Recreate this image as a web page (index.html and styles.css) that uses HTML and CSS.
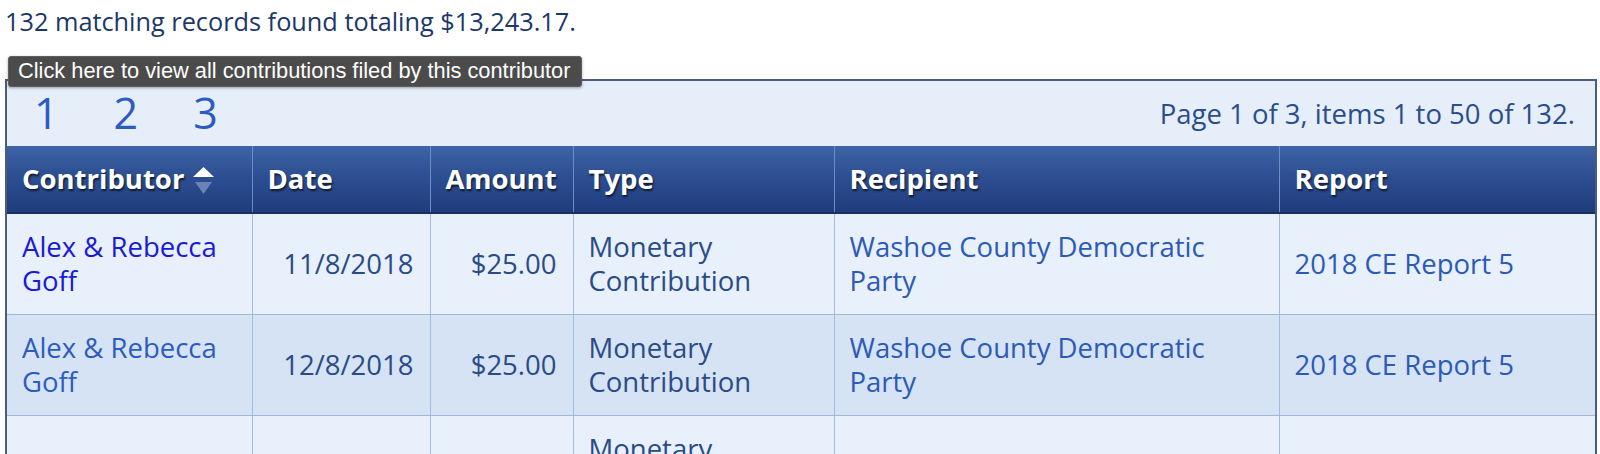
FILE: index.html
```html
<!DOCTYPE html>
<html lang="en">
<head>
<meta charset="utf-8">
<title>Contributions</title>
<link rel="stylesheet" href="styles.css">
</head>
<body>
<div class="page">
  <p class="summary">132 matching records found totaling $13,243.17.</p>
  <div class="tooltip">Click here to view all contributions filed by this contributor</div>
  <div class="results">
    <div class="pager">
      <div class="pages">
        <a href="#" class="pg">1</a>
        <a href="#" class="pg">2</a>
        <a href="#" class="pg">3</a>
      </div>
      <div class="page-info">Page 1 of 3, items 1 to 50 of 132.</div>
    </div>
    <table class="grid">
      <colgroup>
        <col class="c-contrib">
        <col class="c-date">
        <col class="c-amount">
        <col class="c-type">
        <col class="c-recip">
        <col class="c-report">
      </colgroup>
      <thead>
        <tr>
          <th>Contributor <svg class="sort" width="23" height="30" viewBox="0 0 23 30"><polygon points="1,11 22,11 11.5,1" fill="#ffffff"/><polygon points="3,16 20,16 11.5,28" fill="#6a82b6"/></svg></th>
          <th>Date</th>
          <th class="num">Amount</th>
          <th>Type</th>
          <th>Recipient</th>
          <th>Report</th>
        </tr>
      </thead>
      <tbody>
        <tr class="odd">
          <td><a href="#" class="contrib hover">Alex &amp; Rebecca Goff</a></td>
          <td class="num">11/8/2018</td>
          <td class="num">$25.00</td>
          <td>Monetary Contribution</td>
          <td><a href="#" class="link">Washoe County Democratic Party</a></td>
          <td><a href="#" class="link">2018 CE Report 5</a></td>
        </tr>
        <tr class="even">
          <td><a href="#" class="contrib">Alex &amp; Rebecca Goff</a></td>
          <td class="num">12/8/2018</td>
          <td class="num">$25.00</td>
          <td>Monetary Contribution</td>
          <td><a href="#" class="link">Washoe County Democratic Party</a></td>
          <td><a href="#" class="link">2018 CE Report 5</a></td>
        </tr>
        <tr class="odd">
          <td><a href="#" class="contrib">Alex Goff</a></td>
          <td class="num">1/8/2019</td>
          <td class="num">$25.00</td>
          <td>Monetary Contribution</td>
          <td><a href="#" class="link">Washoe County Democrats</a></td>
          <td><a href="#" class="link">2019 CE Report 1</a></td>
        </tr>
      </tbody>
    </table>
  </div>
</div>
</body>
</html>
```

FILE: styles.css
```css
html, body {
  margin: 0;
  padding: 0;
  background: #ffffff;
}

body {
  font-family: "Open Sans", "DejaVu Sans", sans-serif;
  font-size: 27.5px;
  line-height: 34px;
  color: #1e3a6c;
}

.page {
  position: relative;
  padding: 0 3px 0 5px;
}

.summary {
  margin: 4px 0 41px;
  font-size: 25.3px;
  color: #1d3768;
}

.tooltip {
  position: absolute;
  left: 8px;
  top: 52px;
  z-index: 5;
  background: #4b4b4b;
  border: 1px solid #5e5e5e;
  border-radius: 3px;
  box-shadow: 0 1px 3px rgba(0, 0, 0, 0.35);
  color: #ffffff;
  font-family: "Liberation Sans", Arial, sans-serif;
  font-size: 21.8px;
  line-height: 27px;
  padding: 0 11px 2px 9px;
  white-space: nowrap;
}

.results {
  border: 2px solid #4a5c7f;
  border-bottom: none;
  background: #e6effa;
}

.pager {
  display: flex;
  align-items: center;
  justify-content: space-between;
  height: 65px;
  padding: 0 20px 0 27px;
  background: #e5eef9;
}

.pages {
  display: flex;
  gap: 55px;
  font-size: 43px;
  line-height: 58px;
  padding-bottom: 2px;
}

.pg {
  color: #2c5cbf;
  text-decoration: none;
}

.page-info {
  color: #2b4d8c;
}

.grid {
  width: 100%;
  table-layout: fixed;
  border-collapse: collapse;
}

.c-contrib { width: 245px; }
.c-date { width: 178px; }
.c-amount { width: 143px; }
.c-type { width: 261px; }
.c-recip { width: 445px; }
.c-report { width: 316px; }

.grid th {
  text-align: left;
  font-weight: 700;
  color: #ffffff;
  padding: 16px 16px 16px 15px;
  height: 34px;
  background: linear-gradient(#3e63a6 0%, #2d4f92 45%, #1f3d7c 100%);
  border-left: 1px solid #6d8dc4;
  border-bottom: 2px solid #182f68;
  text-shadow: 1px 2px 2px rgba(0, 0, 0, 0.65);
  white-space: nowrap;
}

.grid th:first-child {
  border-left: none;
}

.grid th.num,
.grid td.num {
  text-align: right;
}

.sort {
  vertical-align: -7px;
  margin-left: 0;
}

.grid td {
  padding: 16px 16px 16px 15px;
  vertical-align: middle;
  color: #2a4b86;
  border-left: 1px solid #a3bbdc;
  border-bottom: 1px solid #9fb6d7;
}

.grid td:first-child {
  border-left: none;
}

.grid tr.odd td {
  background: #e7f0fb;
}

.grid tr.even td {
  background: #d5e3f5;
}

.contrib {
  color: #2c5cbd;
  text-decoration: none;
}

.contrib.hover {
  color: #1a1ad6;
}

.link {
  color: #2c5ab6;
  text-decoration: none;
}
```
